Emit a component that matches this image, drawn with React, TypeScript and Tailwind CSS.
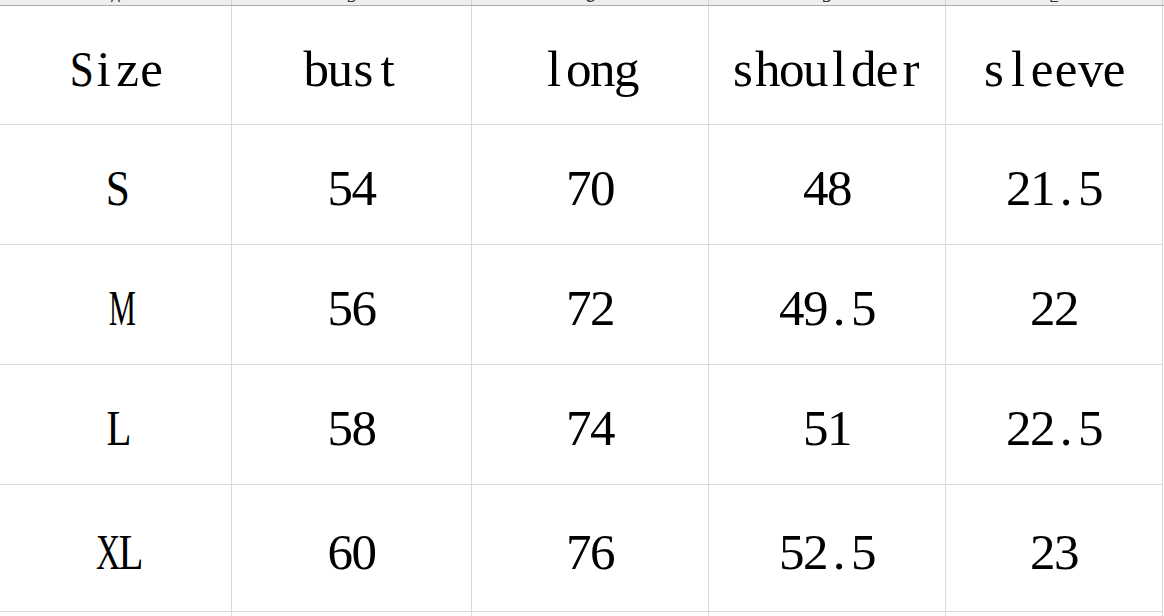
import React from 'react';

const columns = ['A', 'B', 'C', 'D', 'E'];

const rows: string[][] = [
    ['Size', 'bust', 'long', 'shoulder', 'sleeve'],
    ['S', '54', '70', '48', '21.5'],
    ['M', '56', '72', '49.5', '22'],
    ['L', '58', '74', '51', '22.5'],
    ['XL', '60', '76', '52.5', '23'],
];

// wide capitals get squeezed into a half-width cell, like the sheet's font does
const squeeze: Record<string, string> = {
    M: 'scale-x-[0.6]',
    X: 'scale-x-[0.66]',
    L: 'scale-x-[0.8]',
    S: 'scale-x-[0.85]',
};

const gridCols = 'grid grid-cols-[232px_240px_237px_237px_217px]';

const MonoText: React.FC<{ text: string }> = ({ text }) => (
    <span className="flex">
        {text.split('').map((ch, i) => (
            <span key={i} className={`inline-block w-[24px] text-center ${squeeze[ch] ?? ''}`}>
                {ch}
            </span>
        ))}
    </span>
);

const App: React.FC = () => {
    return (
        <div className="w-[1164px] h-[616px] overflow-hidden bg-white text-black font-['Liberation_Serif','Times_New_Roman',serif]">
            {/* column header strip, mostly scrolled out of view */}
            <div className={`${gridCols} h-[6px] overflow-hidden bg-[#eeeeee] border-b border-[#acacac]`}>
                {columns.map(c => (
                    <div
                        key={c}
                        className="border-r border-[#d4d4d4] text-center text-[14px] leading-none text-[#333] font-['Liberation_Sans',sans-serif] -mt-[10px]"
                    >
                        {c}
                    </div>
                ))}
            </div>

            {rows.map((row, r) => (
                <div
                    key={r}
                    className={`${gridCols} ${r === rows.length - 1 ? 'h-[127px]' : r === 0 ? 'h-[119px]' : 'h-[120px]'}`}
                >
                    {row.map((cell, c) => (
                        <div
                            key={c}
                            className="flex items-center justify-center pt-2 border-r border-b border-[#dadada] text-[51px] leading-none"
                        >
                            <MonoText text={cell} />
                        </div>
                    ))}
                </div>
            ))}

            <div className={`${gridCols} h-[4px]`}>
                {columns.map(c => (
                    <div key={c} className="border-r border-[#dadada]" />
                ))}
            </div>
        </div>
    );
};

export default App;
